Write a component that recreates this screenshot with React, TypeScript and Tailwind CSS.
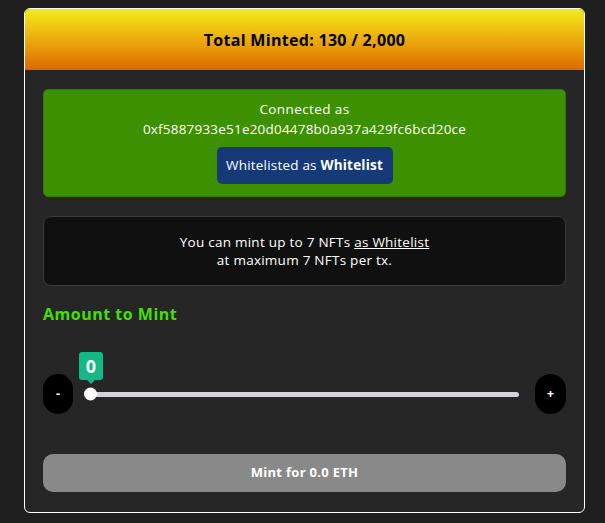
import React from "react";

const font = { fontFamily: '"Open Sans", "Noto Sans", sans-serif' };

export default function App() {
  const amount = 0;
  return (
    <div className="min-h-[523px] w-full bg-[#1f1f1f] pt-2 pb-[10px]" style={font}>
      <div className="ml-[24px] w-[561px] overflow-hidden rounded-[6px] border border-white bg-[#262626]">
        <div className="flex h-[61px] items-center justify-center bg-gradient-to-b from-[#f2ec1c] to-[#dc6800]">
          <h1 className="text-[16px] font-bold tracking-[0.3px] text-black">Total Minted: 130 / 2,000</h1>
        </div>

        <div className="px-[18px] pt-[19px] pb-[20px]">
          <div className="flex flex-col items-center rounded-[5px] border border-[#2f7a00] bg-[#3d9100] pt-[9px] pb-[12px] text-white">
            <p className="text-[13.5px] leading-[20px] tracking-[0.4px]">Connected as</p>
            <p className="text-[13.5px] leading-[20px] tracking-[0.2px]">0xf5887933e51e20d04478b0a937a429fc6bcd20ce</p>
            <div className="mt-[8px] flex h-[37px] w-[176px] items-center justify-center rounded-[5px] bg-[#163a78] text-[13.5px] tracking-[0.2px]">
              <span>
                Whitelisted as <strong className="font-bold">Whitelist</strong>
              </span>
            </div>
          </div>

          <div className="mt-[19px] flex h-[70px] flex-col items-center justify-center rounded-[8px] border border-[#3a3a3a] bg-[#101010] text-[13.5px] leading-[18px] tracking-[0.25px] text-white">
            <p>
              You can mint up to 7 NFTs <span className="underline">as Whitelist</span>
            </p>
            <p>at maximum 7 NFTs per tx.</p>
          </div>

          <h2 className="mt-[16px] text-[16px] font-bold tracking-[0.5px] text-[#43e000]">Amount to Mint</h2>

          <div className="mt-[48px] flex items-center gap-[12px]">
            <button className="flex h-[40px] w-[30px] items-center justify-center rounded-full bg-black text-[13px] font-bold text-white">
              -
            </button>
            <div className="relative flex h-[40px] flex-1 items-center">
              <div className="h-[5px] w-full rounded-full bg-[#d4d4d8]" />
              <div className="absolute left-[-1px] top-1/2 h-[13px] w-[13px] -translate-y-1/2 rounded-full bg-white" />
              <div className="absolute left-[-6px] top-[-22px] flex h-[32px] w-[24px] flex-col items-center">
                <div className="flex h-[28px] w-[24px] items-center justify-center rounded-[3px] bg-[#13b886] text-[18px] font-bold text-white">
                  {amount}
                </div>
                <div className="h-0 w-0 border-x-[4px] border-t-[4px] border-x-transparent border-t-[#13b886]" />
              </div>
            </div>
            <button className="ml-[4px] flex h-[40px] w-[31px] items-center justify-center rounded-full bg-black text-[13px] font-bold text-white">
              +
            </button>
          </div>

          <button className="mt-[40px] flex h-[38px] w-full items-center justify-center rounded-[10px] bg-[#898989] text-[13px] font-bold tracking-[0.3px] text-white">
            Mint for 0.0 ETH
          </button>
        </div>
      </div>
    </div>
  );
}
